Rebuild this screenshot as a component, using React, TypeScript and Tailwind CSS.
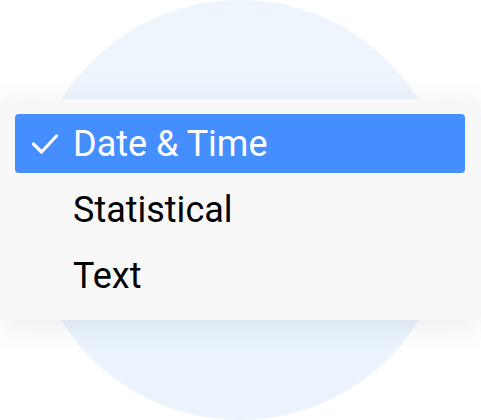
const items = ["Date & Time", "Statistical", "Text"];

export default function App() {
  const selected = "Date & Time";

  return (
    <div className="relative w-[481px] h-[420px] bg-white overflow-hidden font-['Roboto',sans-serif]">
      {/* backdrop circle */}
      <div className="absolute left-[30px] top-0 w-[420px] h-[420px] rounded-full bg-gradient-to-b from-[#eef5fc] to-[#ebf4fc]" />

      <div className="relative pt-[99px]">
        <div className="w-[480px] rounded-[8px] bg-[#f8f8f8] p-[15px] flex flex-col gap-[7px] shadow-[0_6px_30px_rgba(60,80,110,0.11)]">
          {items.map((item) => {
            const active = item === selected;
            return (
              <div
                key={item}
                className={`h-[59px] rounded-[4px] flex items-center text-[36px] leading-none ${
                  active ? "bg-[#448eff] text-white" : "text-black"
                }`}
              >
                <span className="w-[58px] flex justify-center pl-[1px]">
                  {active && (
                    <svg width="28" height="22" viewBox="0 0 28 22" fill="none">
                      <path
                        d="M2.5 11 L10.5 19 L25.5 3"
                        stroke="white"
                        strokeWidth="3.2"
                        strokeLinecap="round"
                        strokeLinejoin="round"
                      />
                    </svg>
                  )}
                </span>
                <span>{item}</span>
              </div>
            );
          })}
        </div>
      </div>
    </div>
  );
}
